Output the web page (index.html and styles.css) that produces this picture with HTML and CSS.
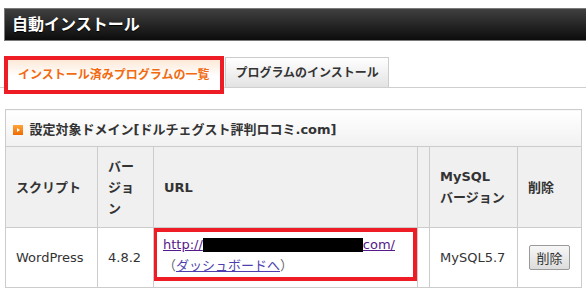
FILE: index.html
```html
<!DOCTYPE html>
<html lang="ja">
<head>
<meta charset="utf-8">
<title>自動インストール</title>
<link rel="stylesheet" href="styles.css">
</head>
<body>
<div class="titlebar">自動インストール</div>
<div class="tabs">
  <div class="tab tab-active">インストール済みプログラムの一覧</div>
  <div class="tab">プログラムのインストール</div>
</div>
<table class="list">
  <colgroup>
    <col class="c1"><col class="c2"><col class="c3"><col class="c4"><col class="c5"><col class="c6">
  </colgroup>
  <tr>
    <td colspan="6" class="domain">
      <svg class="ico" width="10" height="10" viewBox="0 0 10 10"><defs><linearGradient id="g" x1="0" y1="0" x2="0" y2="1"><stop offset="0" stop-color="#ffa53a"/><stop offset="1" stop-color="#ee6a00"/></linearGradient></defs><rect width="10" height="10" fill="url(#g)"/><path d="M4 3 L7 5 L4 7 Z" fill="#fff"/></svg>
      <span>設定対象ドメイン[ドルチェグスト評判ロコミ.com]</span>
    </td>
  </tr>
  <tr class="head">
    <th>スクリプト</th>
    <th>バージョン</th>
    <th>URL</th>
    <th class="empty"></th>
    <th>MySQL<br>バージョン</th>
    <th>削除</th>
  </tr>
  <tr class="row">
    <td>WordPress</td>
    <td>4.8.2</td>
    <td class="urlcell">
      <div class="mark">
        <a class="url" href="#">http://<span class="redact"></span>com/</a><br>
        <span class="dash">（<a href="#">ダッシュボードへ</a>）</span>
      </div>
    </td>
    <td class="empty"></td>
    <td>MySQL5.7</td>
    <td><button class="del">削除</button></td>
  </tr>
</table>
</body>
</html>
```
FILE: styles.css
```css
html, body {
  margin: 0;
  padding: 0;
  background: #fff;
}
body {
  font-family: "DejaVu Sans", "Noto Sans CJK JP", sans-serif;
  color: #333;
  font-size: 13px;
  overflow: hidden;
  width: 586px;
}
.titlebar {
  margin: 8px -10px 0 4px;
  height: 31px;
  line-height: 31px;
  border: 1px solid #7a7a7a;
  background: linear-gradient(#404040, #0c0c0c);
  color: #fff;
  font-weight: bold;
  font-size: 16px;
  padding-left: 7px;
  text-shadow: 0 1px 1px #000;
}
.tabs {
  margin-top: 15px;
  height: 31px;
  border-bottom: 1px solid #cfcfcf;
  display: flex;
  align-items: flex-start;
  padding-left: 4px;
}
.tab {
  box-sizing: border-box;
  font-size: 12px;
  font-weight: bold;
  white-space: nowrap;
}
.tab-active {
  height: 38px;
  line-height: 30px;
  padding: 0 11px 0 10px;
  border: 4px solid #ee1c25;
  color: #f26a10;
  background: linear-gradient(#fde9d8, #fff 55%);
}
.tab:not(.tab-active) {
  margin-top: 1px;
  margin-left: 1px;
  height: 30px;
  line-height: 30px;
  padding: 0 9px;
  border: 1px solid #cccccc;
  border-bottom: none;
  background: linear-gradient(#ffffff, #e3e3e3);
  color: #333;
}
.list {
  margin: 21px 0 0 5px;
  border-collapse: collapse;
  table-layout: fixed;
  width: 576px;
}
.c1 { width: 92px; }
.c2 { width: 56px; }
.c3 { width: 264px; }
.c4 { width: 12px; }
.c5 { width: 88px; }
.c6 { width: 64px; }
.list td, .list th {
  border: 1px solid #cccccc;
  padding: 0 10px;
  text-align: left;
  vertical-align: middle;
}
.list td.domain {
  height: 36px;
  padding: 0 0 0 7px;
  background: linear-gradient(#ffffff, #f1f1f1);
  font-weight: bold;
  white-space: nowrap;
}
.domain .ico {
  vertical-align: -1px;
  margin-right: 2px;
}
.head th {
  height: 80px;
  background: #f0f0f0;
  font-weight: bold;
  line-height: 21px;
}
.list .empty {
  padding: 0;
}
.list td.urlcell {
  padding: 0 0 6px 0;
  vertical-align: top;
}
.mark {
  border: 4px solid #ee1c25;
  margin-left: -1px;
  padding: 2px 6px 1px 6px;
  line-height: 21px;
  white-space: nowrap;
}
.url {
  color: #551a8b;
}
.redact {
  display: inline-block;
  width: 160px;
  height: 14px;
  background: #000;
  vertical-align: -3px;
}
.dash a {
  color: #4e3fb0;
}
.dash {
  color: #666;
}
.del {
  font-family: "Noto Sans CJK JP", sans-serif;
  font-size: 13px;
  color: #333;
  width: 41px;
  height: 25px;
  padding: 0;
  margin-left: 1px;
  border: 1px solid #9a9a9a;
  border-radius: 2px;
  background: linear-gradient(#f7f7f7, #dcdcdc);
}
```
